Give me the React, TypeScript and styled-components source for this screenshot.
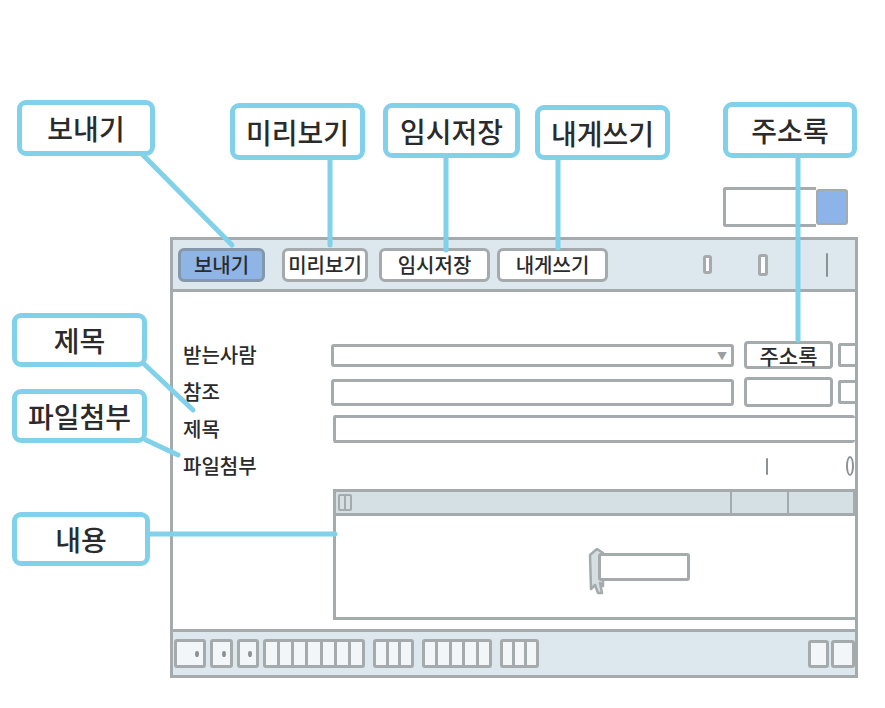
import React from "react";
import styled, { createGlobalStyle } from "styled-components";

const GRAY = "#a5aaad";
const CYAN = "#80d1e9";
const PANEL = "#dde7ee";
const INK = "#2b2b2b";

const GlobalStyle = createGlobalStyle`
  * { box-sizing: border-box; }
  body {
    margin: 0;
    background: #fff;
    font-family: "Noto Sans CJK KR", "Noto Sans", sans-serif;
    color: ${INK};
  }
`;

const Stage = styled.div`
  position: relative;
  width: 885px;
  height: 708px;
  padding: 187px 0 0 170px;
  overflow: hidden;
`;

/* ---------- callouts (annotation layer) ---------- */

const Callout = styled.div<{ $x: number; $y: number; $w: number; $h: number }>`
  position: absolute;
  left: ${(p) => p.$x}px;
  top: ${(p) => p.$y}px;
  width: ${(p) => p.$w}px;
  height: ${(p) => p.$h}px;
  border: 5px solid ${CYAN};
  border-radius: 9px;
  background: #fff;
  display: flex;
  align-items: center;
  justify-content: center;
  font-size: 28px;
  font-weight: 500;
  line-height: 1;
  z-index: 3;
`;

const Wires = styled.svg`
  position: absolute;
  inset: 0;
  pointer-events: none;
  z-index: 2;
`;

/* ---------- top-right search widget ---------- */

const WidgetRow = styled.div`
  width: 688px;
  height: 40px;
  margin-bottom: 10px;
  padding-right: 10px;
  display: flex;
  justify-content: flex-end;
  align-items: stretch;
`;

const SearchBox = styled.div`
  width: 93px;
  border: 3px solid ${GRAY};
  border-right: none;
  border-radius: 3px 0 0 3px;
  background: #fff;
`;

const SearchGo = styled.div`
  width: 32px;
  margin: 2px 0;
  border: 2px solid ${GRAY};
  border-radius: 3px;
  background: #8db4e8;
`;

/* ---------- window ---------- */

const Window = styled.div`
  width: 688px;
  border: 3px solid ${GRAY};
  background: #fff;
  display: flex;
  flex-direction: column;
`;

const Toolbar = styled.div`
  height: 52px;
  background: ${PANEL};
  border-bottom: 3px solid ${GRAY};
  display: flex;
  align-items: center;
  padding: 0 27px 0 5px;
`;

const ToolButton = styled.div<{ $w: number; $primary?: boolean; $ml?: number }>`
  width: ${(p) => p.$w}px;
  height: 34px;
  margin-left: ${(p) => p.$ml ?? 0}px;
  border: 3px solid ${(p) => (p.$primary ? "#8497ab" : GRAY)};
  border-radius: 6px;
  background: ${(p) => (p.$primary ? "#8fb5e6" : "#fff")};
  display: flex;
  align-items: center;
  justify-content: center;
  font-size: 20px;
  font-weight: 500;
  line-height: 1;
`;

const ToolIcons = styled.div`
  margin-left: auto;
  display: flex;
  align-items: center;
`;

const Pill = styled.div<{ $w: number; $h: number; $ml: number }>`
  width: ${(p) => p.$w}px;
  height: ${(p) => p.$h}px;
  margin-left: ${(p) => p.$ml}px;
  border: 3px solid ${GRAY};
  border-radius: 3px;
  background: #fff;
`;

const Stick = styled.div<{ $ml: number; $h: number }>`
  width: 2px;
  height: ${(p) => p.$h}px;
  margin-left: ${(p) => p.$ml}px;
  background: #8c9194;
  border-radius: 1px;
`;

/* ---------- form ---------- */

const Form = styled.div`
  display: grid;
  grid-template-columns: 158px 1fr;
  grid-template-rows: 28px 30px 28px 30px 131px;
  row-gap: 8px;
  padding-top: 49px;
  margin-bottom: 9px;
`;

const Label = styled.div`
  display: flex;
  align-items: center;
  padding-left: 10px;
  font-size: 20px;
  font-weight: 500;
  line-height: 1;
`;

const FieldRow = styled.div`
  display: flex;
  align-items: center;
`;

const Input = styled.div<{ $h: number; $ml?: number }>`
  flex: 1;
  height: ${(p) => p.$h}px;
  margin-left: ${(p) => p.$ml ?? 0}px;
  border: 3px solid ${GRAY};
  border-right-width: ${(p) => (p.$ml ? 0 : 3)}px;
  border-radius: 3px;
  background: #fff;
  display: flex;
  align-items: center;
  justify-content: flex-end;
  padding-right: 4px;
  color: #9a9fa2;
  font-size: 10px;
`;

const SideButton = styled.div<{ $h: number }>`
  width: 89px;
  height: ${(p) => p.$h}px;
  margin-left: 10px;
  border: 3px solid ${GRAY};
  border-radius: 4px;
  background: #fff;
  display: flex;
  align-items: center;
  justify-content: center;
  font-size: 21px;
  font-weight: 500;
  line-height: 1;
`;

const Stub = styled.div`
  width: 17px;
  height: 24px;
  margin-left: 5px;
  border: 3px solid ${GRAY};
  border-right: none;
  border-radius: 3px 0 0 3px;
`;

const AttachRow = styled.div`
  display: flex;
  align-items: center;
  padding-left: 435px;
`;

const Oval = styled.div`
  width: 8px;
  height: 20px;
  margin-left: 78px;
  border: 2px solid #8c9194;
  border-radius: 50%;
`;

const Editor = styled.div`
  grid-column: 2;
  border-left: 3px solid ${GRAY};
  border-bottom: 3px solid ${GRAY};
  margin-left: 2px;
  display: flex;
  flex-direction: column;
`;

const EditorBar = styled.div`
  height: 27px;
  background: #d5e0e4;
  border-top: 3px solid ${GRAY};
  border-bottom: 3px solid ${GRAY};
  display: flex;
  align-items: stretch;
`;

const Grip = styled.div`
  width: 14px;
  margin: 2px 0 2px 2px;
  border: 2px solid ${GRAY};
  border-radius: 2px;
  background: linear-gradient(90deg, transparent 4px, ${GRAY} 4px, ${GRAY} 6px, transparent 6px);
`;

const BarCell = styled.div<{ $w?: number; $flex?: boolean }>`
  ${(p) => (p.$flex ? "flex: 1;" : `width: ${p.$w}px;`)}
  border-right: 2px solid ${GRAY};
`;

const EditorBody = styled.div`
  flex: 1;
  display: flex;
  align-items: flex-start;
  padding: 31px 0 0 252px;
`;

const TextBox = styled.div`
  width: 92px;
  height: 28px;
  margin: 6px 0 0 -9px;
  border: 3px solid ${GRAY};
  border-radius: 3px;
  background: #fff;
`;

/* ---------- footer ---------- */

const Footer = styled.div`
  height: 46px;
  background: ${PANEL};
  border-top: 3px solid ${GRAY};
  display: flex;
  align-items: center;
  padding: 0 0 0 1px;
`;

const FooterSet = styled.div<{ $gap: number }>`
  display: flex;
  align-items: center;
  gap: ${(p) => p.$gap}px;
`;

const KeyBox = styled.div<{ $w: number }>`
  position: relative;
  width: ${(p) => p.$w}px;
  height: 29px;
  border: 3px solid ${GRAY};
  border-radius: 3px;
  background: #f2f6f8;
  &::after {
    content: "";
    position: absolute;
    right: 4px;
    top: 9px;
    width: 4px;
    height: 6px;
    border-radius: 50% 50% 50% 50% / 40% 40% 60% 60%;
    background: #8c9194;
  }
`;

const KeyGroup = styled.div<{ $w: number }>`
  width: ${(p) => p.$w}px;
  height: 29px;
  border: 3px solid ${GRAY};
  border-radius: 3px;
  background: #f2f6f8;
  display: flex;
`;

const KeyCell = styled.div`
  flex: 1;
  & + & {
    border-left: 3px solid ${GRAY};
  }
`;

const FooterRight = styled.div`
  margin-left: auto;
  display: flex;
  gap: 2px;
`;

const Square = styled.div<{ $w: number }>`
  width: ${(p) => p.$w}px;
  height: 28px;
  border: 3px solid ${GRAY};
  border-radius: 3px;
  background: #f2f6f8;
`;

const Group: React.FC<{ w: number; n: number }> = ({ w, n }) => (
  <KeyGroup $w={w}>
    {Array.from({ length: n }).map((_, i) => (
      <KeyCell key={i} />
    ))}
  </KeyGroup>
);

const callouts = [
  { text: "보내기", x: 17, y: 100, w: 138, h: 56 },
  { text: "미리보기", x: 230, y: 103, w: 135, h: 57 },
  { text: "임시저장", x: 383, y: 103, w: 137, h: 55 },
  { text: "내게쓰기", x: 535, y: 105, w: 135, h: 55 },
  { text: "주소록", x: 723, y: 102, w: 134, h: 56 },
  { text: "제목", x: 12, y: 313, w: 135, h: 54 },
  { text: "파일첨부", x: 12, y: 389, w: 135, h: 54 },
  { text: "내용", x: 12, y: 512, w: 138, h: 54 },
];

const wires = [
  [140, 152, 232, 245],
  [330, 158, 330, 245],
  [446, 156, 446, 250],
  [558, 158, 558, 248],
  [798, 156, 798, 340],
  [142, 362, 193, 410],
  [146, 440, 178, 455],
  [148, 534, 335, 534],
];

const App: React.FC = () => (
  <>
    <GlobalStyle />
    <Stage>
      <WidgetRow>
        <SearchBox />
        <SearchGo />
      </WidgetRow>

      <Window>
        <Toolbar>
          <ToolButton $w={87} $primary>보내기</ToolButton>
          <ToolButton $w={86} $ml={17}>미리보기</ToolButton>
          <ToolButton $w={111} $ml={11}>임시저장</ToolButton>
          <ToolButton $w={111} $ml={7}>내게쓰기</ToolButton>
          <ToolIcons>
            <Pill $w={9} $h={19} $ml={0} />
            <Pill $w={10} $h={22} $ml={46} />
            <Stick $h={24} $ml={58} />
          </ToolIcons>
        </Toolbar>

        <Form>
          <Label>받는사람</Label>
          <FieldRow>
            <Input $h={23}>▼</Input>
            <SideButton $h={28}>주소록</SideButton>
            <Stub />
          </FieldRow>

          <Label>참조</Label>
          <FieldRow>
            <Input $h={27} />
            <SideButton $h={30} />
            <Stub />
          </FieldRow>

          <Label>제목</Label>
          <FieldRow>
            <Input $h={28} $ml={2} />
          </FieldRow>

          <Label>파일첨부</Label>
          <AttachRow>
            <Stick $h={17} $ml={0} />
            <Oval />
          </AttachRow>

          <Editor>
            <EditorBar>
              <Grip />
              <BarCell $flex />
              <BarCell $w={57} />
              <BarCell $w={66} />
            </EditorBar>
            <EditorBody>
              <svg width="19" height="48" viewBox="0 0 19 48">
                <path
                  d="M2 8 L9 2 L15 6 L15 39 L12 36 L14 46 L10 46 L7 38 L3 42 Z"
                  fill="#d5dfe3"
                  stroke={GRAY}
                  strokeWidth="2.5"
                  strokeLinejoin="round"
                />
              </svg>
              <TextBox />
            </EditorBody>
          </Editor>
        </Form>

        <Footer>
          <FooterSet $gap={8}>
            <FooterSet $gap={4}>
              <KeyBox $w={32} />
              <KeyBox $w={23} />
              <KeyBox $w={22} />
              <Group w={102} n={7} />
            </FooterSet>
            <Group w={41} n={3} />
            <Group w={70} n={5} />
            <Group w={39} n={3} />
          </FooterSet>
          <FooterRight>
            <Square $w={21} />
            <Square $w={24} />
          </FooterRight>
        </Footer>
      </Window>

      <Wires width="885" height="708">
        {wires.map(([x1, y1, x2, y2], i) => (
          <line
            key={i}
            x1={x1}
            y1={y1}
            x2={x2}
            y2={y2}
            stroke={CYAN}
            strokeWidth="5"
            strokeLinecap="round"
          />
        ))}
      </Wires>

      {callouts.map((c) => (
        <Callout key={c.text + c.y} $x={c.x} $y={c.y} $w={c.w} $h={c.h}>
          {c.text}
        </Callout>
      ))}
    </Stage>
  </>
);

export default App;
